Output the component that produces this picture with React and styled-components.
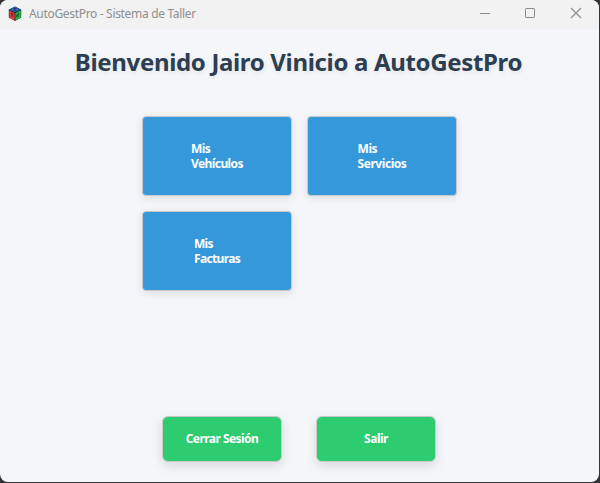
import React from 'react';
import styled, { createGlobalStyle } from 'styled-components';

const GlobalStyle = createGlobalStyle`
  * { box-sizing: border-box; }
  body {
    margin: 0;
    background: #333436;
    font-family: "Segoe UI", "Noto Sans", "Open Sans", sans-serif;
  }
`;

const Window = styled.div`
  display: flex;
  flex-direction: column;
  width: 599px;
  height: 482px;
  overflow: hidden;
  border-radius: 8px;
  background: #f5f6fa;
`;

const TitleBar = styled.header`
  display: flex;
  align-items: center;
  flex: none;
  height: 29px;
  padding: 0 0 2px 7px;
  background: #f2f2f2;
  color: #8f8f8f;
`;

const Caption = styled.span`
  flex: 1;
  margin-left: 6px;
  padding-top: 1px;
  font-size: 12px;
  line-height: 16px;
  letter-spacing: ${({ $tracking }) => $tracking}px;
  white-space: nowrap;
`;

const WindowControls = styled.div`
  display: flex;
`;

const ControlButton = styled.button`
  display: grid;
  place-items: center;
  width: 45.5px;
  height: 27px;
  padding: 0 1px 1px 0;
  border: 0;
  background: none;
  color: #8b8b8b;
`;

const Content = styled.main`
  display: flex;
  flex: 1;
  flex-direction: column;
  align-items: center;
  padding-bottom: 20px;
`;

const Heading = styled.h1`
  margin: 16px 2px 0 0;
  font-size: 24px;
  font-weight: 700;
  line-height: 33px;
  letter-spacing: ${({ $tracking }) => $tracking}px;
  color: #2c3e50;
  text-shadow: 1px 2px 5px rgba(0, 0, 0, 0.07);
  white-space: nowrap;
`;

const Menu = styled.nav`
  display: grid;
  grid-template-columns: repeat(2, 150px);
  grid-auto-rows: 80px;
  gap: 15px;
  margin-top: 38px;
`;

const BaseButton = styled.button`
  display: flex;
  align-items: center;
  justify-content: center;
  padding: 0;
  border: 1px solid #c8cbc8;
  color: #fff;
  font-family: inherit;
  font-size: 12px;
  font-weight: 700;
  line-height: 15px;
  text-align: left;
`;

const MenuButton = styled(BaseButton)`
  border-radius: 4px;
  background: #3498db;
  box-shadow: 0 2px 8px rgba(0, 0, 0, 0.1);
`;

const ActionButton = styled(BaseButton)`
  width: 120px;
  height: 46px;
  padding-bottom: 1px;
  border-radius: 6px;
  background: #2ecc71;
  box-shadow: 0 4px 12px rgba(0, 0, 0, 0.12);
`;

const Label = styled.span`
  letter-spacing: ${({ $tracking }) => $tracking}px;
  white-space: pre;
`;

const Actions = styled.footer`
  display: flex;
  gap: 34px;
  margin: auto 1px 0 0;
`;

const CubeIcon = () => (
  <svg width="16" height="16" viewBox="0 0 16 16">
    <path d="M8 .4 14.2 3.6v8L8 15l-6.2-3.4v-8z" fill="#20262b" />
    <path d="M8 .8 13.5 3.4 8 6.2 2.5 3.4z" fill="#2c62c0" />
    <path d="M2.2 4.2 7.6 6.9v7.5l-5.4-3z" fill="#e23a34" />
    <path d="m13.8 4.2-5.4 2.7v7.5l5.4-3z" fill="#22b548" />
    <path
      d="M6.6 2.6h2.8M6.8 4.3h2M3.5 6.9l3 1.4M5 8v2.8M9.9 8.4v3M12 7.2 10.6 9.4l1.4 1"
      stroke="#20242a"
      strokeWidth="0.8"
      fill="none"
    />
  </svg>
);

const MinimizeIcon = () => (
  <svg width="12" height="12" viewBox="0 0 12 12" fill="none" stroke="currentColor">
    <path d="M1 6.5h10" />
  </svg>
);

const MaximizeIcon = () => (
  <svg width="12" height="12" viewBox="0 0 12 12" fill="none" stroke="currentColor">
    <rect x="1.5" y="1.5" width="9" height="9" rx="0.6" />
  </svg>
);

const CloseIcon = () => (
  <svg width="12" height="12" viewBox="0 0 12 12" fill="none" stroke="currentColor" strokeWidth="1.1">
    <path d="m1 1 10 10M11 1 1 11" />
  </svg>
);

const controls = [
  { name: 'Minimizar', Icon: MinimizeIcon },
  { name: 'Maximizar', Icon: MaximizeIcon },
  { name: 'Cerrar', Icon: CloseIcon },
];

const menuItems = [
  { text: 'Mis\nVehículos', tracking: -0.6 },
  { text: 'Mis\nServicios', tracking: -0.45 },
  { text: 'Mis\nFacturas', tracking: -0.65 },
];

export default function App() {
  return (
    <>
      <GlobalStyle />
      <Window>
        <TitleBar>
          <CubeIcon />
          <Caption $tracking={-0.32}>AutoGestPro - Sistema de Taller</Caption>
          <WindowControls>
            {controls.map(({ name, Icon }) => (
              <ControlButton key={name} aria-label={name}>
                <Icon />
              </ControlButton>
            ))}
          </WindowControls>
        </TitleBar>
        <Content>
          <Heading $tracking={-0.34}>Bienvenido Jairo Vinicio a AutoGestPro</Heading>
          <Menu>
            {menuItems.map(({ text, tracking }) => (
              <MenuButton key={text}>
                <Label $tracking={tracking}>{text}</Label>
              </MenuButton>
            ))}
          </Menu>
          <Actions>
            <ActionButton>
              <Label $tracking={-0.55}>Cerrar Sesión</Label>
            </ActionButton>
            <ActionButton>
              <Label $tracking={-0.5}>Salir</Label>
            </ActionButton>
          </Actions>
        </Content>
      </Window>
    </>
  );
}
